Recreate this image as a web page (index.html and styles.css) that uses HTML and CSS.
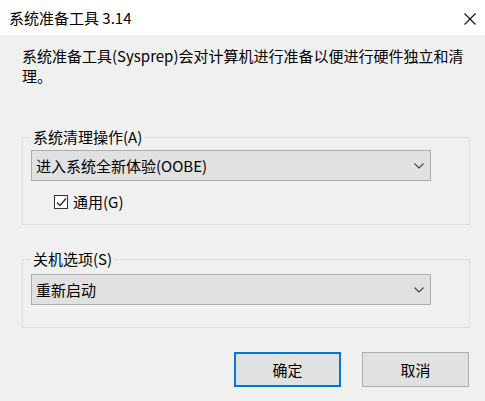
FILE: index.html
```html
<!DOCTYPE html>
<html lang="zh-CN">
<head>
<meta charset="utf-8">
<title>系统准备工具 3.14</title>
<link rel="stylesheet" href="styles.css">
</head>
<body>
<div class="window">
  <div class="titlebar">
    <span class="title">系统准备工具 3.14</span>
    <span class="close">
      <svg width="12" height="12" viewBox="0 0 12 12"><path d="M0.5 0.5L11.5 11.5M11.5 0.5L0.5 11.5" stroke="#111" stroke-width="1.1" fill="none"/></svg>
    </span>
  </div>
  <div class="content">
    <p class="desc">系统准备工具(Sysprep)会对计算机进行准备以便进行硬件独立和清理。</p>
    <fieldset class="group group-cleanup">
      <legend>系统清理操作(A)</legend>
      <div class="combo">
        <span>进入系统全新体验(OOBE)</span>
        <svg class="chev" width="10" height="6" viewBox="0 0 10 6"><path d="M0.5 0.5L5 5L9.5 0.5" stroke="#444" stroke-width="1.1" fill="none"/></svg>
      </div>
      <label class="check">
        <span class="box">
          <svg width="11" height="11" viewBox="0 0 11 11"><path d="M1 5.5L4 8.5L10 1.5" stroke="#222" stroke-width="1.2" fill="none"/></svg>
        </span>
        <span>通用(G)</span>
      </label>
    </fieldset>
    <fieldset class="group group-shutdown">
      <legend>关机选项(S)</legend>
      <div class="combo">
        <span>重新启动</span>
        <svg class="chev" width="10" height="6" viewBox="0 0 10 6"><path d="M0.5 0.5L5 5L9.5 0.5" stroke="#444" stroke-width="1.1" fill="none"/></svg>
      </div>
    </fieldset>
    <div class="buttons">
      <button class="btn btn-default">确定</button>
      <button class="btn">取消</button>
    </div>
  </div>
</div>
</body>
</html>
```
FILE: styles.css
```css
html, body {
  margin: 0;
  padding: 0;
}
body {
  width: 485px;
  height: 401px;
  overflow: hidden;
  background: #f0f0f0;
  font-family: "Noto Sans CJK SC", "Noto Sans", sans-serif;
  font-size: 15px;
  color: #000;
}
.window {
  width: 485px;
  height: 401px;
  display: flex;
  flex-direction: column;
}
.titlebar {
  height: 35px;
  background: #fff;
  display: flex;
  align-items: center;
  justify-content: space-between;
  padding: 0 9px 0 9px;
  box-sizing: border-box;
}
.title {
  line-height: 20px;
  margin-top: 1px;
}
.close {
  display: flex;
  margin-right: 0;
  margin-top: 2px;
}
.content {
  padding: 0 16px 0 22px;
  display: flex;
  flex-direction: column;
}
.desc {
  margin: 11px 0 0 0;
  line-height: 20px;
  width: 445px;
}
.group {
  margin: 0;
  border: 1px solid #dcdcdc;
  padding: 5px 38px 12px 8px;
  width: 447px;
  box-sizing: border-box;
}
.group legend {
  padding: 0 2px;
  margin-left: 0;
  line-height: 16px;
  height: 16px;
}
.group-cleanup {
  margin-top: 43px;
}
.group-shutdown {
  margin-top: 26px;
  padding-top: 7px;
  padding-bottom: 22px;
}
.combo {
  height: 31px;
  width: 400px;
  box-sizing: border-box;
  border: 1px solid #adadad;
  background: #e1e1e1;
  display: flex;
  align-items: center;
  justify-content: space-between;
  padding: 0 6px 0 4px;
  line-height: 20px;
}
.chev {
  display: block;
  margin-top: 1px;
}
.check {
  display: flex;
  align-items: center;
  margin: 11px 0 0 23px;
  line-height: 20px;
  gap: 5px;
}
.box {
  width: 14px;
  height: 14px;
  box-sizing: border-box;
  border: 1px solid #333;
  background: #fff;
  display: flex;
  align-items: center;
  justify-content: center;
}
.box svg {
  display: block;
}
.buttons {
  display: flex;
  justify-content: flex-end;
  gap: 21px;
  margin-top: 24px;
}
.btn {
  width: 107px;
  height: 35px;
  box-sizing: border-box;
  border: 1px solid #adadad;
  background: #e1e1e1;
  font-family: inherit;
  font-size: 15px;
  color: #000;
  padding: 0;
  margin: 0;
}
.btn-default {
  border: 2px solid #0078d7;
}
```
